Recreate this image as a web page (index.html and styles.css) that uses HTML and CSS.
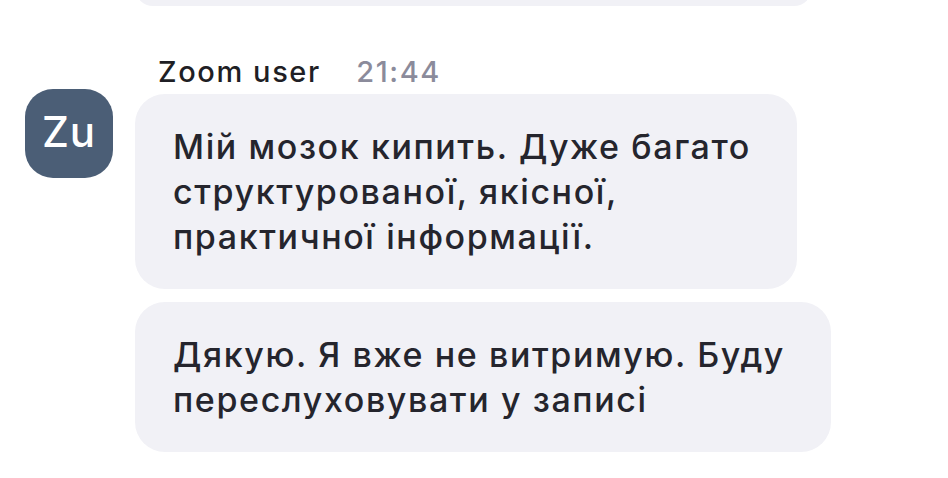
FILE: index.html
```html
<!DOCTYPE html>
<html lang="uk">
<head>
    <meta charset="UTF-8">
    <meta name="viewport" content="width=device-width, initial-scale=1.0">
    <title>Chat</title>
    <link rel="stylesheet" href="styles.css">
</head>
<body>
    <div class="chat">
        <div class="bubble bubble-prev"></div>

        <div class="message">
            <div class="avatar">Zu</div>
            <div class="message-body">
                <div class="message-meta">
                    <span class="sender">Zoom user</span>
                    <span class="time">21:44</span>
                </div>
                <div class="bubble">Мій мозок кипить. Дуже багато<br>структурованої, якісної,<br>практичної інформації.</div>
                <div class="bubble">Дякую. Я вже не витримую. Буду<br>переслуховувати у записі</div>
            </div>
        </div>
    </div>
</body>
</html>
```

FILE: styles.css
```css
body {
    margin: 0;
    background: #fff;
    font-family: Inter, "Noto Sans", sans-serif;
    color: #25252d;
    overflow: hidden;
}
.chat {
    padding-left: 25px;
}
.bubble {
    width: fit-content;
    background: #f1f1f6;
    border-radius: 30px;
    padding: 30px 46px 30px 38px;
    font-size: 34px;
    font-weight: 500;
    letter-spacing: 1.6px;
    line-height: 45px;
    margin-bottom: 13px;
}
.bubble-prev {
    margin-left: 110px;
    margin-top: -30px;
    width: 677px;
    height: 36px;
    padding: 0;
    box-sizing: border-box;
}
.message {
    display: flex;
    gap: 22px;
    margin-top: 48px;
}
.avatar {
    flex: none;
    width: 88px;
    height: 89px;
    margin-top: 35px;
    border-radius: 28px;
    background: #4b5e76;
    color: #fff;
    font-size: 42px;
    font-weight: 500;
    letter-spacing: 1px;
    display: flex;
    align-items: center;
    justify-content: center;
    padding-bottom: 4px;
    box-sizing: border-box;
}
.message-meta {
    padding-left: 23px;
    font-size: 29px;
    font-weight: 500;
    letter-spacing: 1.6px;
    line-height: 36px;
    margin-bottom: 4px;
}
.sender {
    color: #1f1f25;
}
.time {
    margin-left: 26px;
    color: #8b8b9b;
}
```
